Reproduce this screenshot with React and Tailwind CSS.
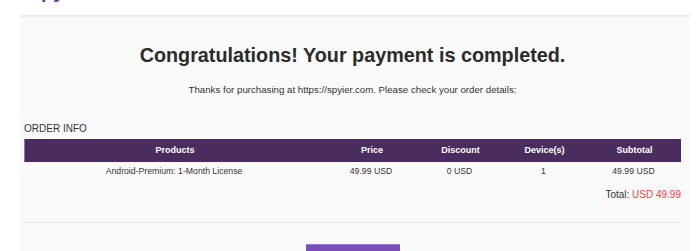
import React from 'react';

const COLS = ['Products', 'Price', 'Discount', 'Device(s)', 'Subtotal'];
const ROW = ['Android-Premium: 1-Month License', '49.99 USD', '0 USD', '1', '49.99 USD'];

export default function App() {
  return (
    <div className="w-[700px] h-[251px] overflow-hidden bg-white text-[#333] font-['Liberation_Sans',Arial,sans-serif]">
      {/* Top bar with cropped logo */}
      <div className="h-[15px] overflow-hidden pl-[30px]">
        <div className="-mt-[20px] text-[20px] font-bold text-[#6b3fa0] leading-[22px]">spyier</div>
      </div>

      {/* Panel */}
      <div className="ml-[20px] w-[670px] h-[236px] bg-[#fafafa] border-t-2 border-[#ececec] pl-[4px] pr-[9px]">
        <h1 className="pt-[26px] text-center text-[19.8px] font-bold leading-[24px] text-[#2b2b2b]">
          Congratulations! Your payment is completed.
        </h1>
        <p className="mt-[16px] text-center text-[9.7px] leading-[13px]">
          Thanks for purchasing at https://spyier.com. Please check your order details:
        </p>

        <div className="mt-[27px] text-[10px] leading-[12px]">ORDER INFO</div>
        <div className="mt-[4px] grid grid-cols-[300px_94px_83px_85px_95px] h-[23px] items-center bg-[#4a2d5e] text-white text-[9px] font-bold border-l border-[#8a74a0]">
          {COLS.map((c) => (
            <div key={c} className="text-center">{c}</div>
          ))}
        </div>
        <div className="grid grid-cols-[300px_94px_83px_85px_95px] h-[20px] items-center text-[8.7px]">
          {ROW.map((c, i) => (
            <div key={i} className="text-center">{c}</div>
          ))}
        </div>
        <div className="mt-[7px] text-right text-[10px] leading-[12px]">
          Total: <span className="text-[#ff3b3b]">USD 49.99</span>
        </div>

        <div className="mt-[21px] border-t border-[#e5e5e5]" />

        <div className="mt-[21px] flex justify-center">
          <button className="w-[94px] h-[30px] bg-[#7a4db9] border-t border-[#9b7ad0] text-white text-[12px]">
            Continue
          </button>
        </div>
      </div>
    </div>
  );
}
